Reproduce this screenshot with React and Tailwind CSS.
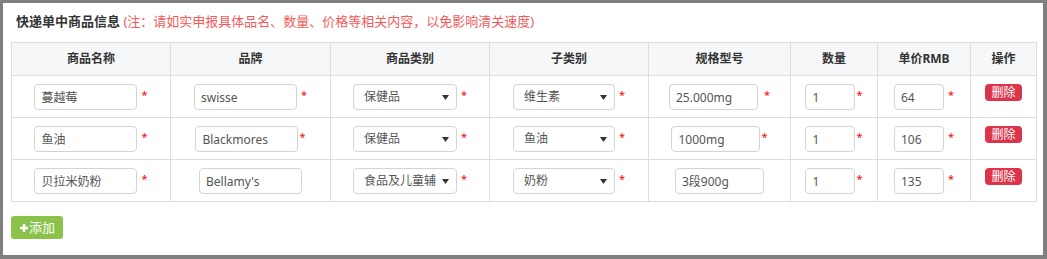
import React from "react";

const FONT = { fontFamily: '"Noto Sans", "Noto Sans CJK SC", sans-serif' };

const rows = [
  {
    name: "蔓越莓",
    brand: "swisse",
    brandStar: "space",
    cat: "保健品",
    sub: "维生素",
    spec: "25.000mg",
    specStar: "wide",
    qty: "1",
    price: "64",
  },
  {
    name: "鱼油",
    brand: "Blackmores",
    brandStar: "tight",
    cat: "保健品",
    sub: "鱼油",
    spec: "1000mg",
    specStar: "tight",
    qty: "1",
    price: "106",
  },
  {
    name: "贝拉米奶粉",
    brand: "Bellamy's",
    brandStar: "none",
    cat: "食品及儿童辅",
    sub: "奶粉",
    spec: "3段900g",
    specStar: "none",
    qty: "1",
    price: "135",
  },
];

function Star({ mode }) {
  if (mode === "none") return null;
  const ml =
    mode === "tight" ? "ml-[1px]" : mode === "wide" ? "ml-[6px]" : "ml-[4px]";
  return (
    <span className={"text-[11px] leading-[11px] text-[#ff0000] mt-[5px] " + ml}>
      *
    </span>
  );
}

function Input({ value, w }) {
  return (
    <input
      readOnly
      value={value}
      style={{ ...FONT, width: w }}
      className="h-[26px] border border-[#d4d4d4] rounded-[4px] px-[6px] text-[12px] text-[#555] bg-white outline-none"
    />
  );
}

function Select({ value, w }) {
  return (
    <div
      style={{ width: w }}
      className="h-[26px] border border-[#d4d4d4] rounded-[4px] pl-[10px] pr-[7px] flex items-center justify-between text-[12px] text-[#555] bg-white"
    >
      <span className="whitespace-nowrap overflow-hidden">{value}</span>
      <svg width="7" height="5" viewBox="0 0 7 5" className="shrink-0">
        <polygon points="0,0 7,0 3.5,5" fill="#333" />
      </svg>
    </div>
  );
}

function Cell({ children }) {
  return (
    <div className="h-[42px] border-r border-b border-[#dddddd] pt-[8px] flex justify-center items-start">
      {children}
    </div>
  );
}

const headers = ["商品名称", "品牌", "商品类别", "子类别", "规格型号", "数量", "单价RMB", "操作"];

export default function App() {
  return (
    <div
      style={FONT}
      className="w-[1047px] h-[259px] bg-white border-l-[3px] border-t-[3px] border-r-[4px] border-b-[4px] border-[#7f7f7f] pl-[8px] pt-[8px]"
    >
      <div className="pl-[5px] h-[20px] leading-[20px] text-[13px] whitespace-nowrap">
        <span className="font-bold text-[#333]">快递单中商品信息</span>
        <span className="text-[#f55a5a]"> (注：请如实申报具体品名、数量、价格等相关内容，以免影响清关速度)</span>
      </div>

      <div className="mt-[11px] w-[1026px] grid grid-cols-[159px_160px_159px_159px_142px_87px_93px_66px] border-l border-t border-[#dddddd]">
        {headers.map((h) => (
          <div
            key={h}
            className="h-[33px] bg-[#f6f7f9] border-r border-b border-[#dddddd] flex items-center justify-center text-[12px] font-bold text-[#333]"
          >
            {h}
          </div>
        ))}

        {rows.map((r, i) => (
          <React.Fragment key={i}>
            <Cell>
              <Input value={r.name} w={103} />
              <Star mode="space" />
            </Cell>
            <Cell>
              <Input value={r.brand} w={103} />
              <Star mode={r.brandStar} />
            </Cell>
            <Cell>
              <Select value={r.cat} w={104} />
              <Star mode="space" />
            </Cell>
            <Cell>
              <Select value={r.sub} w={102} />
              <Star mode="space" />
            </Cell>
            <Cell>
              <Input value={r.spec} w={89} />
              <Star mode={r.specStar} />
            </Cell>
            <Cell>
              <Input value={r.qty} w={50} />
              <Star mode="tight" />
            </Cell>
            <Cell>
              <Input value={r.price} w={50} />
              <Star mode="space" />
            </Cell>
            <div className="h-[42px] border-r border-b border-[#dddddd] pt-[8px] flex justify-center items-start">
              <button className="h-[17px] px-[6px] rounded-[4px] bg-[#dc354b] text-white text-[12px] leading-[17px]">
                删除
              </button>
            </div>
          </React.Fragment>
        ))}
      </div>

      <button className="mt-[14px] h-[23px] pl-[9px] pr-[8px] rounded-[3px] bg-[#8bc34a] text-white text-[13px] leading-[23px] flex items-center">
        <svg width="8" height="8" viewBox="0 0 8 8" className="mr-[1px]">
          <path d="M2.8 0h2.4v2.8H8v2.4H5.2V8H2.8V5.2H0V2.8h2.8z" fill="#fff" />
        </svg>
        添加
      </button>
    </div>
  );
}
